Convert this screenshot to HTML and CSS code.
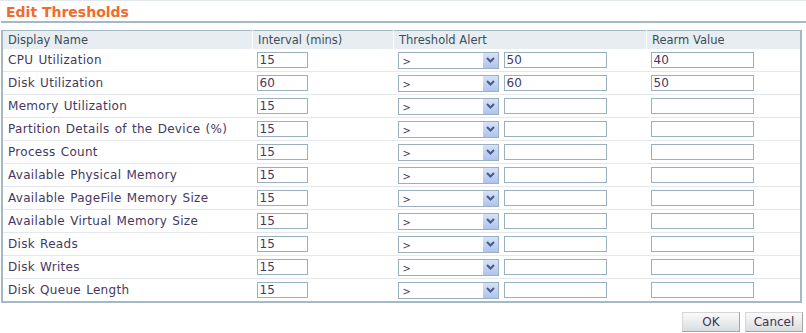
FILE: index.html
```html
<!DOCTYPE html>
<html lang="en">
<head>
  <meta charset="UTF-8">
  <meta name="viewport" content="width=device-width, initial-scale=1.0">
  <title>Edit Thresholds</title>
  <link rel="stylesheet" href="styles.css">
</head>
<body>
  <h1 class="title">Edit Thresholds</h1>

  <table class="grid">
    <thead>
      <tr>
        <th class="c-name">Display Name</th>
        <th class="c-int">Interval (mins)</th>
        <th class="c-alert">Threshold Alert</th>
        <th class="c-rearm">Rearm Value</th>
      </tr>
    </thead>
    <tbody>
      <tr>
        <td>CPU Utilization</td>
        <td><input class="in-int" type="text" value="15"></td>
        <td><div class="alert"><div class="sel"><span>&gt;</span><i class="arr"><svg width="9" height="6" viewBox="0 0 9 6"><path d="M1 1l3.5 3.5L8 1" fill="none" stroke="#4a5a80" stroke-width="2"/></svg></i></div><input class="in-val" type="text" value="50"></div></td>
        <td><input class="in-val" type="text" value="40"></td>
      </tr>
      <tr>
        <td>Disk Utilization</td>
        <td><input class="in-int" type="text" value="60"></td>
        <td><div class="alert"><div class="sel"><span>&gt;</span><i class="arr"><svg width="9" height="6" viewBox="0 0 9 6"><path d="M1 1l3.5 3.5L8 1" fill="none" stroke="#4a5a80" stroke-width="2"/></svg></i></div><input class="in-val" type="text" value="60"></div></td>
        <td><input class="in-val" type="text" value="50"></td>
      </tr>
      <tr>
        <td>Memory Utilization</td>
        <td><input class="in-int" type="text" value="15"></td>
        <td><div class="alert"><div class="sel"><span>&gt;</span><i class="arr"><svg width="9" height="6" viewBox="0 0 9 6"><path d="M1 1l3.5 3.5L8 1" fill="none" stroke="#4a5a80" stroke-width="2"/></svg></i></div><input class="in-val" type="text" value=""></div></td>
        <td><input class="in-val" type="text" value=""></td>
      </tr>
      <tr>
        <td>Partition Details of the Device (%)</td>
        <td><input class="in-int" type="text" value="15"></td>
        <td><div class="alert"><div class="sel"><span>&gt;</span><i class="arr"><svg width="9" height="6" viewBox="0 0 9 6"><path d="M1 1l3.5 3.5L8 1" fill="none" stroke="#4a5a80" stroke-width="2"/></svg></i></div><input class="in-val" type="text" value=""></div></td>
        <td><input class="in-val" type="text" value=""></td>
      </tr>
      <tr>
        <td>Process Count</td>
        <td><input class="in-int" type="text" value="15"></td>
        <td><div class="alert"><div class="sel"><span>&gt;</span><i class="arr"><svg width="9" height="6" viewBox="0 0 9 6"><path d="M1 1l3.5 3.5L8 1" fill="none" stroke="#4a5a80" stroke-width="2"/></svg></i></div><input class="in-val" type="text" value=""></div></td>
        <td><input class="in-val" type="text" value=""></td>
      </tr>
      <tr>
        <td>Available Physical Memory</td>
        <td><input class="in-int" type="text" value="15"></td>
        <td><div class="alert"><div class="sel"><span>&gt;</span><i class="arr"><svg width="9" height="6" viewBox="0 0 9 6"><path d="M1 1l3.5 3.5L8 1" fill="none" stroke="#4a5a80" stroke-width="2"/></svg></i></div><input class="in-val" type="text" value=""></div></td>
        <td><input class="in-val" type="text" value=""></td>
      </tr>
      <tr>
        <td>Available PageFile Memory Size</td>
        <td><input class="in-int" type="text" value="15"></td>
        <td><div class="alert"><div class="sel"><span>&gt;</span><i class="arr"><svg width="9" height="6" viewBox="0 0 9 6"><path d="M1 1l3.5 3.5L8 1" fill="none" stroke="#4a5a80" stroke-width="2"/></svg></i></div><input class="in-val" type="text" value=""></div></td>
        <td><input class="in-val" type="text" value=""></td>
      </tr>
      <tr>
        <td>Available Virtual Memory Size</td>
        <td><input class="in-int" type="text" value="15"></td>
        <td><div class="alert"><div class="sel"><span>&gt;</span><i class="arr"><svg width="9" height="6" viewBox="0 0 9 6"><path d="M1 1l3.5 3.5L8 1" fill="none" stroke="#4a5a80" stroke-width="2"/></svg></i></div><input class="in-val" type="text" value=""></div></td>
        <td><input class="in-val" type="text" value=""></td>
      </tr>
      <tr>
        <td>Disk Reads</td>
        <td><input class="in-int" type="text" value="15"></td>
        <td><div class="alert"><div class="sel"><span>&gt;</span><i class="arr"><svg width="9" height="6" viewBox="0 0 9 6"><path d="M1 1l3.5 3.5L8 1" fill="none" stroke="#4a5a80" stroke-width="2"/></svg></i></div><input class="in-val" type="text" value=""></div></td>
        <td><input class="in-val" type="text" value=""></td>
      </tr>
      <tr>
        <td>Disk Writes</td>
        <td><input class="in-int" type="text" value="15"></td>
        <td><div class="alert"><div class="sel"><span>&gt;</span><i class="arr"><svg width="9" height="6" viewBox="0 0 9 6"><path d="M1 1l3.5 3.5L8 1" fill="none" stroke="#4a5a80" stroke-width="2"/></svg></i></div><input class="in-val" type="text" value=""></div></td>
        <td><input class="in-val" type="text" value=""></td>
      </tr>
      <tr>
        <td>Disk Queue Length</td>
        <td><input class="in-int" type="text" value="15"></td>
        <td><div class="alert"><div class="sel"><span>&gt;</span><i class="arr"><svg width="9" height="6" viewBox="0 0 9 6"><path d="M1 1l3.5 3.5L8 1" fill="none" stroke="#4a5a80" stroke-width="2"/></svg></i></div><input class="in-val" type="text" value=""></div></td>
        <td><input class="in-val" type="text" value=""></td>
      </tr>
    </tbody>
  </table>

  <div class="actions">
    <div class="note"></div>
    <button class="btn">OK</button>
    <button class="btn">Cancel</button>
  </div>
</body>
</html>
```

FILE: styles.css
```css
body { margin: 0; padding: 0 0 0 1px; font-family: "DejaVu Sans", Verdana, sans-serif; font-size: 11px; color: #45385f; background: #fff; border-top: 1px solid #e3e8ec; overflow: hidden; }
.title { margin: 0 0 7px 0; padding: 4px 0 1px 5px; font-size: 14px; font-weight: bold; color: #f26b2b; border-bottom: 2px solid #a3bac6; line-height: 15px; }
.grid { width: 801px; border-collapse: collapse; border: 2px solid #a3bac6; border-top-width: 1px; table-layout: fixed; }
.grid th { background: #e8edf1; color: #3b4d5c; font-weight: normal; text-align: left; height: 18px; padding: 0 0 0 5px; border-left: 1px solid #fff; line-height: 18px; font-size: 11.5px; }
.grid th:first-child { border-left: none; }
.c-name { width: 244px; }
.c-int { width: 135px; }
.c-alert { width: 247px; }
.grid td { height: 22px; padding: 0 0 0 4px; border-top: 1px solid #e4e8ec; white-space: nowrap; font-size: 12px; letter-spacing: 0.3px; word-spacing: 1px; }
.grid td:first-child { padding-left: 5px; }
.grid tbody tr:first-child td { border-top: none; }
input { font-family: inherit; font-size: 12px; color: #45385f; border: 1px solid #9ab0bd; height: 16px; padding: 0 0 0 2px; margin: 0; box-sizing: border-box; display: block; }
.in-int { width: 51px; }
.in-val { width: 103px; }
.alert { display: flex; gap: 5px; align-items: center; }
.sel { width: 101px; height: 17px; border: 1px solid #9ab0bd; box-sizing: border-box; display: flex; align-items: center; justify-content: space-between; padding-left: 4px; }
.sel span { font-size: 10px; color: #45385f; padding-top: 2px; }
.arr { width: 15px; height: 15px; background: linear-gradient(#d6e2fa, #aec3ef); display: flex; align-items: center; justify-content: center; }
.actions { display: flex; align-items: flex-start; gap: 5px; padding: 9px 3px 0 4px; height: 24px; }
.note { flex: 1; align-self: flex-end; height: 1px; max-width: 92px; margin-right: auto; border-top: 1px solid #fff1a8; }
.btn { width: 58px; height: 20px; font-family: inherit; font-size: 12px; color: #3d3553; border: 1px solid #a4a4a4; border-top-color: #d6d6d6; border-left-color: #d6d6d6; background: linear-gradient(#fafafa, #d9dde0); padding: 0; cursor: pointer; }
```
